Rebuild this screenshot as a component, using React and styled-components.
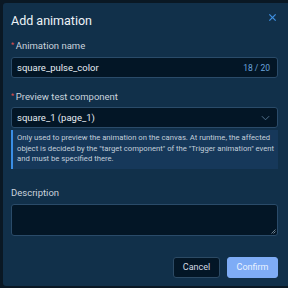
import React from "react";
import styled, { createGlobalStyle } from "styled-components";

const Global = createGlobalStyle`
  html, body {
    margin: 0;
    padding: 0;
    background: #0a1824;
  }
  * {
    box-sizing: border-box;
  }
`;

const Page = styled.div`
  width: 288px;
  height: 288px;
  padding: 3px 0 2px 3px;
  overflow: hidden;
  font-family: Roboto, "Liberation Sans", Arial, sans-serif;
`;

const Dialog = styled.div`
  width: 285px;
  height: 283px;
  background: #11304a;
  border-radius: 3px 0 0 3px;
  padding: 8px 10px 0 8px;
  display: flex;
  flex-direction: column;
`;

const Header = styled.div`
  display: flex;
  justify-content: space-between;
  align-items: flex-start;
  height: 22px;
`;

const Title = styled.h2`
  margin: 0;
  font-size: 12.5px;
  line-height: 20px;
  font-weight: 400;
  color: #eef3f8;
`;

const Close = styled.button`
  border: none;
  background: none;
  padding: 2px 1px 0 0;
  color: #3f8fe0;
  display: flex;
  cursor: pointer;
`;

const Field = styled.div`
  display: flex;
  flex-direction: column;
  margin-top: ${(p) => p.$top}px;
`;

const Label = styled.label`
  font-size: 9.5px;
  color: #c9d3dd;
  height: 14px;
  line-height: 14px;
  margin-bottom: ${(p) => p.$gap}px;
  &::before {
    content: ${(p) => (p.$required ? '"* "' : '""')};
    color: #e0524f;
    font-size: 7px;
    vertical-align: 2px;
  }
`;

const InputBox = styled.div`
  height: 21px;
  background: #031626;
  border: 1px solid #2a4b69;
  border-radius: 3px;
  display: flex;
  align-items: center;
  justify-content: space-between;
  padding: 0 7px 0 5px;
  font-size: 9.5px;
  color: #e6edf3;
`;

const Counter = styled.span`
  font-size: 8.5px;
  color: #6ba4dc;
`;

const Hint = styled.div`
  margin-top: 2px;
  background: #16385a;
  border-left: 2px solid #3a8ee6;
  padding: 3px 1px 4px 4px;
  font-size: 7.7px;
  line-height: 10.5px;
  color: #c3cfda;
`;

const TextArea = styled.div`
  height: 32px;
  background: #031626;
  border: 1px solid #2a4b69;
  border-radius: 3px;
  position: relative;
`;

const Grip = styled.svg`
  position: absolute;
  right: 1px;
  bottom: 1px;
`;

const Footer = styled.div`
  display: flex;
  justify-content: flex-end;
  gap: 7px;
  margin-top: 21px;
`;

const Button = styled.button`
  height: 21px;
  border-radius: 3px;
  font-family: inherit;
  font-size: 9px;
  padding: 0;
  width: ${(p) => p.$w}px;
  background: ${(p) => (p.$primary ? "#7eacf6" : "#031626")};
  border: 1px solid ${(p) => (p.$primary ? "#7eacf6" : "#2c4a64")};
  color: ${(p) => (p.$primary ? "#eaf2ff" : "#d3dbe3")};
`;

export default function App() {
  return (
    <Page>
      <Global />
      <Dialog>
        <Header>
          <Title>Add animation</Title>
          <Close>
            <svg width="9" height="9" viewBox="0 0 10 10">
              <path d="M1.5 1.5L8.5 8.5M8.5 1.5L1.5 8.5" stroke="currentColor" strokeWidth="1.4" />
            </svg>
          </Close>
        </Header>
        <Field $top={5}>
          <Label $required $gap={5}>Animation name</Label>
          <InputBox>
            <span>square_pulse_color</span>
            <Counter>18 / 20</Counter>
          </InputBox>
        </Field>
        <Field $top={11}>
          <Label $required $gap={4}>Preview test component</Label>
          <InputBox>
            <span>square_1 (page_1)</span>
            <svg width="9" height="6" viewBox="0 0 10 6">
              <path d="M1 1L5 5L9 1" fill="none" stroke="#5a7a96" strokeWidth="1" />
            </svg>
          </InputBox>
          <Hint>
            Only used to preview the animation on the canvas. At runtime, the affected
            object is decided by the "target component" of the "Trigger animation" event
            and must be specified there.
          </Hint>
        </Field>
        <Field $top={16}>
          <Label $gap={5}>Description</Label>
          <TextArea>
            <Grip width="5" height="5" viewBox="0 0 5 5">
              <path d="M4.5 0.5L0.5 4.5M4.5 2.5L2.5 4.5" stroke="#8a9aa8" strokeWidth="0.8" />
            </Grip>
          </TextArea>
        </Field>
        <Footer>
          <Button $w={47}>Cancel</Button>
          <Button $w={51} $primary>Confirm</Button>
        </Footer>
      </Dialog>
    </Page>
  );
}
